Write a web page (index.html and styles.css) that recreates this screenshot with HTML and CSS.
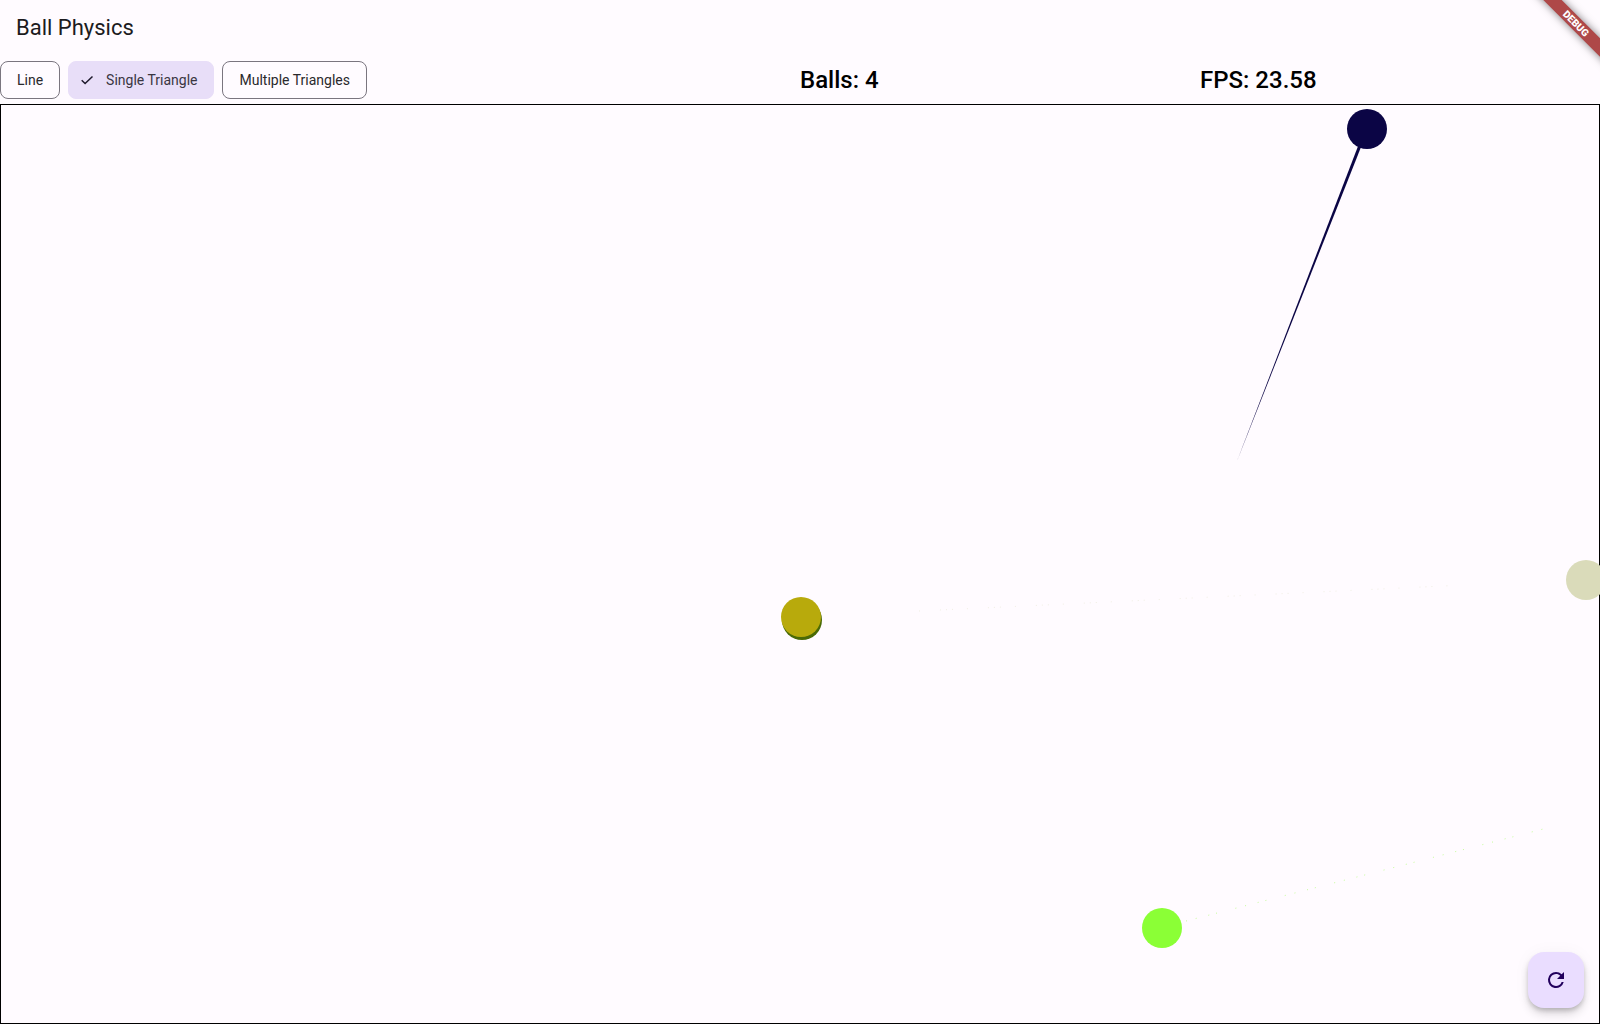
FILE: index.html
```html
<!DOCTYPE html>
<html lang="en">
<head>
<meta charset="utf-8">
<meta name="viewport" content="width=device-width, initial-scale=1">
<title>Ball Physics</title>
<link rel="stylesheet" href="styles.css">
</head>
<body>
<header class="app-bar"><h1 class="app-title">Ball Physics</h1></header>
<div class="toolbar">
  <div class="chips">
    <button class="chip" type="button" aria-pressed="false">Line</button>
    <button class="chip chip-selected" type="button" aria-pressed="true">
      <svg class="check" viewBox="0 0 18 18" aria-hidden="true"><path d="M3.7 9.2 7.1 12.5 14.5 5.5"/></svg>
      Single Triangle
    </button>
    <button class="chip" type="button" aria-pressed="false">Multiple Triangles</button>
  </div>
  <p class="stat">Balls: 4</p>
  <p class="stat">FPS: 23.58</p>
</div>
<main class="stage">
  <svg class="scene" aria-label="Moving balls">
    <polygon points="1236,356 1359,36 1362,37" fill="#0b0545"/>
    <circle cx="1366" cy="24" r="20" fill="#0b0545"/>
    <path class="trail trail-khaki" d="M918 506 1463 480"/>
    <path class="trail trail-green" d="M1185 816 1550 722"/>
    <circle cx="801" cy="515" r="20" fill="#4a6a06"/>
    <circle cx="800" cy="512" r="20" fill="#b8aa0c"/>
    <circle cx="1585" cy="475" r="20" fill="#dadbba"/>
    <circle cx="1161" cy="823" r="20" fill="#8bff36"/>
  </svg>
</main>
<button class="fab" type="button" aria-label="Refresh">
  <svg class="fab-icon" viewBox="0 0 24 24" aria-hidden="true"><path d="M17.65 6.35A7.958 7.958 0 0 0 12 4a8 8 0 1 0 7.73 10h-2.08A6 6 0 1 1 12 6c1.66 0 3.14.69 4.22 1.78L13 11h7V4z"/></svg>
</button>
<div class="debug-corner"><span class="debug-banner">DEBUG</span></div>
</body>
</html>
```
FILE: styles.css
```css
* { box-sizing: border-box; }
body {
  margin: 0;
  min-height: 100vh;
  display: flex;
  flex-direction: column;
  background: #fffbff;
  color: #1c1b1e;
  font-family: Roboto, "Liberation Sans", sans-serif;
}
.app-bar { height: 56px; padding: 0 16px; display: flex; align-items: center; }
.app-title { margin: 0; font-size: 22px; line-height: 28px; font-weight: 400; }
.toolbar {
  height: 48px;
  display: grid;
  grid-template-columns: 2fr 1fr 1fr;
  align-items: center;
}
.chips { display: flex; gap: 8px; }
.chip {
  height: 38px;
  padding: 0 16px;
  display: flex;
  align-items: center;
  border: 1px solid #7a757f;
  border-radius: 8px;
  background: transparent;
  color: #2a292c;
  font: 400 14px/20px Roboto, "Liberation Sans", sans-serif;
}
.chip-selected { padding-left: 9px; gap: 10px; border-color: #e8def8; background: #e8def8; color: #3a3642; }
.check { width: 18px; height: 18px; fill: none; stroke: #1d192b; stroke-width: 1.5; }
.stat { margin: 0; color: #000; font-size: 24px; line-height: 28px; font-weight: 500; }
.stage { position: relative; flex: 1; border: 1px solid #000; }
.scene { position: absolute; inset: 0; width: 100%; height: 100%; overflow: visible; }
.trail { fill: none; stroke-width: 1; }
.trail-green { stroke: #8bff36; stroke-dasharray: 1 9 1 12 1 7 1 19; opacity: 0.5; }
.trail-khaki { stroke: #dadbba; stroke-dasharray: 1 20 1 5 1 5 1 14; opacity: 0.4; }
.fab {
  position: fixed;
  right: 16px;
  bottom: 16px;
  width: 56px;
  height: 56px;
  padding: 16px;
  border: 0;
  border-radius: 16px;
  background: #eaddff;
  box-shadow: 0 3px 5px -1px rgba(0,0,0,.2), 0 6px 10px rgba(0,0,0,.14), 0 1px 18px rgba(0,0,0,.04);
}
.fab-icon { display: block; width: 24px; height: 24px; fill: #22005d; }
.debug-corner { position: absolute; top: 0; right: 0; width: 80px; height: 80px; overflow: hidden; pointer-events: none; }
.debug-banner {
  position: absolute;
  top: 17px;
  right: -36px;
  width: 120px;
  transform: rotate(45deg);
  background: #ae4848;
  box-shadow: 0 0 8px rgba(0,0,0,.5);
  color: #fff;
  font-size: 10px;
  line-height: 13px;
  font-weight: 900;
  text-align: center;
}
```
